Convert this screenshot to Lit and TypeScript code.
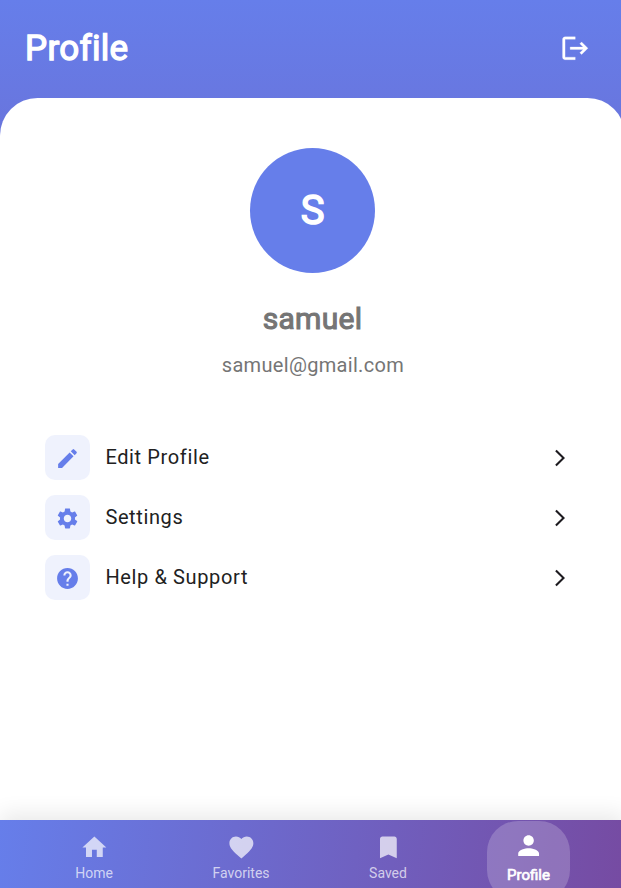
import { LitElement, html, css, svg } from "lit";
import { customElement } from "lit/decorators.js";

const icons = {
  logout: svg`<path d="M17 7l-1.41 1.41L18.17 11H8v2h10.17l-2.58 2.58L17 17l5-5zM4 5h8V3H4c-1.1 0-2 .9-2 2v14c0 1.1.9 2 2 2h8v-2H4V5z"/>`,
  edit: svg`<path d="M3 17.25V21h3.75L17.81 9.94l-3.75-3.75L3 17.25zM20.71 7.04c.39-.39.39-1.02 0-1.41l-2.34-2.34a.9959.9959 0 0 0-1.41 0l-1.83 1.83 3.75 3.75 1.83-1.83z"/>`,
  settings: svg`<path d="M19.14 12.94c.04-.3.06-.61.06-.94 0-.32-.02-.64-.07-.94l2.03-1.58c.18-.14.23-.41.12-.61l-1.92-3.32c-.12-.22-.37-.29-.59-.22l-2.39.96c-.5-.38-1.03-.7-1.62-.94l-.36-2.54c-.04-.24-.24-.41-.48-.41h-3.84c-.24 0-.43.17-.47.41l-.36 2.54c-.59.24-1.13.57-1.62.94l-2.39-.96c-.22-.08-.47 0-.59.22L2.74 8.87c-.12.21-.08.47.12.61l2.03 1.58c-.05.3-.09.63-.09.94s.02.64.07.94l-2.03 1.58c-.18.14-.23.41-.12.61l1.92 3.32c.12.22.37.29.59.22l2.39-.96c.5.38 1.03.7 1.62.94l.36 2.54c.05.24.24.41.48.41h3.84c.24 0 .44-.17.47-.41l.36-2.54c.59-.24 1.13-.56 1.62-.94l2.39.96c.22.08.47 0 .59-.22l1.92-3.32c.12-.22.07-.47-.12-.61l-2.01-1.58zM12 15.6c-1.98 0-3.6-1.62-3.6-3.6s1.62-3.6 3.6-3.6 3.6 1.62 3.6 3.6-1.62 3.6-3.6 3.6z"/>`,
  help: svg`<path d="M12 2C6.48 2 2 6.48 2 12s4.48 10 10 10 10-4.48 10-10S17.52 2 12 2zm1 17h-2v-2h2v2zm2.07-7.75l-.9.92C13.45 12.9 13 13.5 13 15h-2v-.5c0-1.1.45-2.1 1.17-2.83l1.24-1.26c.37-.36.59-.86.59-1.41 0-1.1-.9-2-2-2s-2 .9-2 2H8c0-2.21 1.79-4 4-4s4 1.79 4 4c0 .88-.36 1.68-.93 2.25z"/>`,
  chevron: svg`<path d="M6.23 20.23L8 22l10-10L8 2 6.23 3.77 14.46 12z"/>`,
  home: svg`<path d="M10 20v-6h4v6h5v-8h3L12 3 2 12h3v8z"/>`,
  heart: svg`<path d="M12 21.35l-1.45-1.32C5.4 15.36 2 12.28 2 8.5 2 5.42 4.42 3 7.5 3c1.74 0 3.41.81 4.5 2.09C13.09 3.81 14.76 3 16.5 3 19.58 3 22 5.42 22 8.5c0 3.78-3.4 6.86-8.55 11.54L12 21.35z"/>`,
  bookmark: svg`<path d="M17 3H7c-1.1 0-1.99.9-1.99 2L5 21l7-3 7 3V5c0-1.1-.9-2-2-2z"/>`,
  person: svg`<path d="M12 12c2.21 0 4-1.79 4-4s-1.79-4-4-4-4 1.79-4 4 1.79 4 4 4zm0 2c-2.67 0-8 1.34-8 4v2h16v-2c0-2.66-5.33-4-8-4z"/>`,
};

type IconName = keyof typeof icons;
const icon = (name: IconName, cls: string) =>
  html`<svg class="icon ${cls}" viewBox="0 0 24 24" aria-hidden="true">${icons[name]}</svg>`;

const menu: { icon: IconName; label: string }[] = [
  { icon: "edit", label: "Edit Profile" },
  { icon: "settings", label: "Settings" },
  { icon: "help", label: "Help & Support" },
];

const tabs: { icon: IconName; label: string; active?: boolean }[] = [
  { icon: "home", label: "Home" },
  { icon: "heart", label: "Favorites" },
  { icon: "bookmark", label: "Saved" },
  { icon: "person", label: "Profile", active: true },
];

@customElement("app-root")
export class AppRoot extends LitElement {
  static styles = css`
    :host {
      display: flex;
      flex-direction: column;
      width: 100%;
      height: 100vh;
      overflow: hidden;
      font-family: Roboto, "Liberation Sans", sans-serif;
      background: linear-gradient(180deg, #667eea, #764ba2 740px);
    }
    * { box-sizing: border-box; }
    .icon { display: block; fill: currentColor; flex: none; }
    .header {
      display: flex;
      align-items: center;
      justify-content: space-between;
      height: 98px;
      flex: none;
      padding: 0 30.5px 2px 25px;
      color: #fff;
    }
    .title {
      margin: 0;
      padding-top: 2px;
      font-size: 35px;
      font-weight: 400;
      letter-spacing: 0.3px;
      line-height: 44px;
      -webkit-text-stroke: 1.3px currentColor;
    }
    .logout { width: 30.5px; height: 30.5px; stroke: currentColor; stroke-width: 0.2; }
    .sheet {
      flex: 1;
      width: 625px;
      background: #fff;
      border-radius: 37.5px 37.5px 0 0;
      padding: 50px 45px 0;
      display: flex;
      flex-direction: column;
      align-items: center;
    }
    .avatar {
      width: 125px;
      height: 125px;
      flex: none;
      border-radius: 50%;
      background: #667eea;
      color: #fff;
      font-size: 40px;
      line-height: 125px;
      text-align: center;
      -webkit-text-stroke: 1.5px currentColor;
    }
    .name {
      margin-top: 26px;
      font-size: 30px;
      line-height: 40px;
      letter-spacing: 0.3px;
      color: #757575;
      -webkit-text-stroke: 1.1px currentColor;
    }
    .email {
      margin-top: 13px;
      padding-left: 0.8px;
      font-size: 20px;
      line-height: 26px;
      letter-spacing: 0.3125px;
      color: #757575;
    }
    .menu {
      align-self: stretch;
      margin-top: 57.4px;
      display: flex;
      flex-direction: column;
      gap: 15px;
    }
    .row { display: flex; align-items: center; height: 45px; }
    .tile {
      width: 45px;
      height: 45px;
      border-radius: 10px;
      display: grid;
      place-items: center;
      background: #eff2fd;
      color: #667eea;
    }
    .tile .icon { width: 25px; height: 25px; margin-top: 1px; }
    .label {
      flex: 1;
      padding: 0 0 1.4px 15.4px;
      font-size: 20px;
      line-height: 30px;
      letter-spacing: 0.625px;
      color: #212121;
    }
    .chevron { width: 20px; height: 20px; margin-right: 10px; color: #1d1b20; }
    .nav {
      position: relative;
      flex: none;
      height: 68px;
      width: 625px;
      display: flex;
      padding-left: 20.5px;
      background: linear-gradient(96.4deg, #667eea, #764ba2);
      box-shadow: 0 -6px 22px rgba(0, 0, 0, 0.09);
      color: rgba(255, 255, 255, 0.7);
    }
    .tab {
      width: 147px;
      display: flex;
      flex-direction: column;
      align-items: center;
      padding-top: 12.75px;
      font-size: 14px;
      line-height: 18px;
    }
    .tab .icon { width: 28.75px; height: 28.75px; margin-bottom: 2.5px; }
    .tab.active {
      width: 83px;
      height: 80px;
      margin: 1px 0 0 25.5px;
      padding-top: 9px;
      border-radius: 31px;
      background: rgba(255, 255, 255, 0.2);
      color: #fff;
      font-size: 15px;
      -webkit-text-stroke: 0.7px currentColor;
    }
    .tab.active .icon { width: 31.25px; height: 31.25px; margin-bottom: 4.75px; }
  `;

  render() {
    return html`
      <header class="header">
        <h1 class="title">Profile</h1>
        ${icon("logout", "logout")}
      </header>
      <main class="sheet">
        <div class="avatar">S</div>
        <div class="name">samuel</div>
        <div class="email">samuel@gmail.com</div>
        <div class="menu">
          ${menu.map(
            (m) => html`<div class="row">
              <span class="tile">${icon(m.icon, "")}</span>
              <span class="label">${m.label}</span>
              ${icon("chevron", "chevron")}
            </div>`
          )}
        </div>
      </main>
      <nav class="nav">
        ${tabs.map(
          (t) => html`<div class="tab ${t.active ? "active" : ""}">
            ${icon(t.icon, "")}<span>${t.label}</span>
          </div>`
        )}
      </nav>
    `;
  }
}
